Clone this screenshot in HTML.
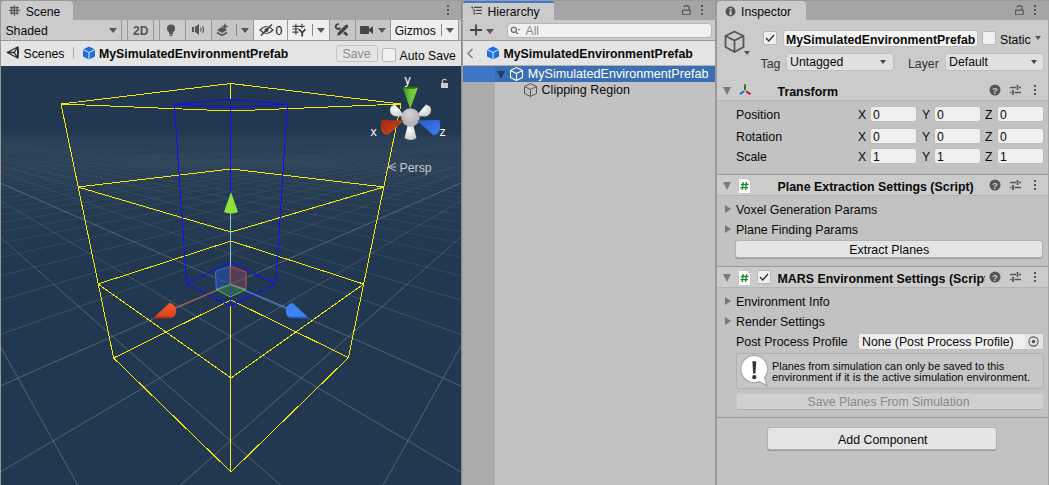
<!DOCTYPE html><html><head><meta charset="utf-8"><style>
*{box-sizing:border-box;margin:0;padding:0}
html,body{width:1049px;height:485px;overflow:hidden;background:#a5a5a5;font-family:"Liberation Sans",sans-serif;color:#090909;font-size:12px}
.a{position:absolute}
.t{position:absolute;white-space:nowrap;line-height:1}
.b{font-weight:bold}
.tabstrip{background:#a5a5a5}
.tab{background:#cbcbcb;border-radius:4px 4px 0 0}
.tb{background:#cbcbcb}
.sep{position:absolute;width:1px;background:#999}
.arr{position:absolute;width:0;height:0;border-left:4px solid transparent;border-right:4px solid transparent;border-top:5px solid #444}
.fld{position:absolute;background:#f0f0f0;border:1px solid #b0b0b0;border-radius:3px}
.btn{position:absolute;background:#e4e4e4;border:1px solid #b2b2b2;border-radius:3px;box-shadow:0 1px 0 #999}
.tri{position:absolute;width:0;height:0;border-top:4px solid transparent;border-bottom:4px solid transparent;border-left:6px solid #555}
</style></head><body><div class="a" style="left:0px;top:0px;width:1049px;height:1px;background:#9a9a9a"></div><div class="a" style="left:0px;top:0px;width:1px;height:485px;background:#999"></div><div class="a" style="left:1px;top:1px;width:72px;height:20px;background:#cbcbcb;border-radius:4px 4px 0 0"></div><svg class="a" style="left:9px;top:5px" width="12" height="12" viewBox="0 0 12 12"><g stroke="#555" stroke-width="1.2" fill="none"><path d="M5.4 0.3V10.8M2.7 1.5V9.5M8.1 1.5V9.5M0 5.4H10.8M1 2.7H9.8M1 8.1H9.8"/></g></svg><div class="t " style="left:25.7px;top:6.27px;font-size:12.2px;">Scene</div><div class="a" style="left:447px;top:5px;width:2px;height:2px;background:#555"></div><div class="a" style="left:447px;top:9px;width:2px;height:2px;background:#555"></div><div class="a" style="left:447px;top:13px;width:2px;height:2px;background:#555"></div><div class="a" style="left:1px;top:20px;width:460px;height:20px;background:#cbcbcb"></div><div class="a" style="left:1px;top:40px;width:460px;height:1px;background:#999"></div><div class="a" style="left:212px;top:20px;width:41px;height:20px;background:#c6c6c6"></div><div class="a" style="left:254px;top:20px;width:33px;height:20px;background:#efefef"></div><div class="a" style="left:288px;top:20px;width:41px;height:20px;background:#efefef"></div><div class="a" style="left:330px;top:20px;width:25px;height:20px;background:#c6c6c6"></div><div class="a" style="left:356px;top:20px;width:34px;height:20px;background:#c6c6c6"></div><div class="a" style="left:391px;top:20px;width:67px;height:20px;background:#efefef"></div><div class="sep" style="left:121px;top:20px;height:20px;background:#999"></div><div class="sep" style="left:127px;top:20px;height:20px;background:#999"></div><div class="sep" style="left:153px;top:20px;height:20px;background:#999"></div><div class="sep" style="left:159px;top:20px;height:20px;background:#999"></div><div class="sep" style="left:185px;top:20px;height:20px;background:#999"></div><div class="sep" style="left:211px;top:20px;height:20px;background:#999"></div><div class="sep" style="left:253px;top:20px;height:20px;background:#999"></div><div class="sep" style="left:287px;top:20px;height:20px;background:#999"></div><div class="sep" style="left:329px;top:20px;height:20px;background:#999"></div><div class="sep" style="left:355px;top:20px;height:20px;background:#999"></div><div class="sep" style="left:390px;top:20px;height:20px;background:#999"></div><div class="sep" style="left:458px;top:20px;height:20px;background:#999"></div><div class="sep" style="left:236px;top:24px;height:12px;background:#888"></div><div class="sep" style="left:312px;top:24px;height:12px;background:#888"></div><div class="sep" style="left:441px;top:24px;height:12px;background:#888"></div><div class="t " style="left:5.4px;top:25.09px;font-size:12.3px;">Shaded</div><div class="arr" style="left:109px;top:28px;border-left-width:4px;border-right-width:4px;border-top:5px solid #555"></div><div class="t b" style="left:133px;top:25.14px;font-size:12px;color:#555">2D</div><svg class="a" style="left:164px;top:23px" width="14" height="14" viewBox="0 0 14 14"><circle cx="7" cy="5.5" r="4" fill="#555"/><rect x="5" y="9" width="4" height="2" fill="#555"/><rect x="5.5" y="11.5" width="3" height="1.5" fill="#555"/></svg><svg class="a" style="left:192px;top:24px" width="13" height="11" viewBox="0 0 13 11"><rect x="0" y="3" width="2" height="5" fill="#555"/><path d="M3 3L7 0V11L3 8Z" fill="#555"/><path d="M8.5 3.5Q10 5.5 8.5 7.5M10.5 2Q12.5 5.5 10.5 9" stroke="#555" stroke-width="1.1" fill="none"/></svg><svg class="a" style="left:216px;top:23px" width="13" height="13" viewBox="0 0 13 13"><path d="M1 7L6 4L11 7L6 10Z" fill="#555"/><path d="M1 9.5L6 12.5L11 9.5" stroke="#555" stroke-width="1.5" fill="none"/><path d="M9 0L10 2.5L12.5 3.5L10 4.5L9 7L8 4.5L5.5 3.5L8 2.5Z" fill="#555"/></svg><div class="arr" style="left:241px;top:28px;border-left-width:4px;border-right-width:4px;border-top:5px solid #555"></div><svg class="a" style="left:259px;top:24px" width="15" height="12" viewBox="0 0 15 12"><path d="M1 6Q7.5 -1 14 6Q7.5 13 1 6Z" stroke="#444" stroke-width="1.2" fill="none"/><circle cx="7.5" cy="6" r="2" fill="#444"/><path d="M2 11.5L13 0.5" stroke="#444" stroke-width="1.5"/></svg><div class="t " style="left:275.5px;top:24.89px;font-size:12.3px;">0</div><svg class="a" style="left:292px;top:23px" width="15" height="15" viewBox="0 0 15 15"><g stroke="#444" stroke-width="1.2" fill="none"><path d="M3.9 0.8V11.8M10 0.8V5.2M0.5 3.3H12.7M0.5 6H7M0.5 9.2H6.5"/></g><path d="M7 6.3L10.2 9.8L13.4 6.3M10.2 9.8V13.5" stroke="#333" stroke-width="1.7" fill="none"/></svg><div class="arr" style="left:317px;top:28px;border-left-width:4px;border-right-width:4px;border-top:5px solid #555"></div><svg class="a" style="left:333px;top:22px" width="17" height="17" viewBox="0 0 17 17"><path d="M6.9 6.8L13.6 12.4" stroke="#444" stroke-width="2.6" stroke-linecap="round"/><path d="M5.9 2.3A2.4 2.4 0 1 0 6.8 6.3" stroke="#444" stroke-width="1.9" fill="none"/><path d="M4 13.8L5 10.4L12.4 3Q13.5 1.9 14.7 3.1Q15.8 4.3 14.8 5.4L7.4 12.8Z" fill="#444" stroke="#c6c6c6" stroke-width="1.4" paint-order="stroke"/></svg><svg class="a" style="left:360px;top:24px" width="14" height="11" viewBox="0 0 14 11"><rect x="0" y="2" width="9" height="8" rx="1" fill="#444"/><path d="M9 5L13 2V10L9 7Z" fill="#444"/></svg><div class="arr" style="left:378px;top:28px;border-left-width:4px;border-right-width:4px;border-top:5px solid #555"></div><div class="t " style="left:394.7px;top:25.26px;font-size:12.1px;">Gizmos</div><div class="arr" style="left:446px;top:28px;border-left-width:4px;border-right-width:4px;border-top:5px solid #555"></div><div class="a" style="left:1px;top:41px;width:460px;height:25px;background:#e4e4e4"></div><svg class="a" style="left:5px;top:45px" width="15" height="15" viewBox="0 0 15 15"><g stroke="#2a2a2a" stroke-width="1.3" fill="none" stroke-linejoin="round"><path d="M2.3 7.5L12.7 2L12.7 13Z"/><path d="M12.7 2Q14.3 7.5 12.7 13"/><path d="M2.3 7.5H9.3L12.7 2M9.3 7.5L12.7 13"/></g></svg><div class="t " style="left:23.5px;top:48.19px;font-size:12.3px;">Scenes</div><div class="sep" style="left:73px;top:47px;height:11px;background:#aaa"></div><svg class="a" style="left:82px;top:46px" width="14" height="14" viewBox="0 0 14 14"><path d="M7 0.5L13 3.5V10.5L7 13.5L1 10.5V3.5Z" fill="#1d6ee0"/><path d="M1 3.5L7 6.5L13 3.5M7 6.5V13.5" stroke="#e8f0ff" stroke-width="1" fill="none"/></svg><div class="t b" style="left:99px;top:47.69px;font-size:12.3px;">MySimulatedEnvironmentPrefab</div><div class="a" style="left:336px;top:45px;width:42px;height:17px;background:#e4e4e4;border:1px solid #c4c4c4;border-radius:3px"></div><div class="t " style="left:342.5px;top:47.69px;font-size:12.3px;color:#8c8c8c">Save</div><div class="a" style="left:382px;top:48px;width:14px;height:14px;background:#f0f0f0;border:1px solid #b8b8b8;border-radius:2px"></div><div class="t " style="left:399.6px;top:49.97px;font-size:12.2px;">Auto Save</div><svg class="a" style="left:1px;top:66px" width="460" height="419" viewBox="1 66 460 419"><defs><linearGradient id="sky" x1="0" y1="0" x2="0" y2="1"><stop offset="0" stop-color="#233b56"/><stop offset="1" stop-color="#223a54"/></linearGradient><linearGradient id="gm" gradientUnits="userSpaceOnUse" x1="0" y1="129" x2="0" y2="485"><stop offset="0" stop-color="#fff" stop-opacity="0"/><stop offset="0.02" stop-color="#fff" stop-opacity="0.5"/><stop offset="0.12" stop-color="#fff" stop-opacity="0.7"/><stop offset="1" stop-color="#fff" stop-opacity="1"/></linearGradient><mask id="m1" maskUnits="userSpaceOnUse" x="0" y="0" width="1049" height="485"><rect x="0" y="0" width="1049" height="485" fill="url(#gm)"/></mask></defs><rect x="0" y="0" width="1049" height="485" fill="#213850"/><linearGradient id="hz" gradientUnits="userSpaceOnUse" x1="0" y1="132" x2="0" y2="260"><stop offset="0" stop-color="#fff" stop-opacity="0"/><stop offset="0.06" stop-color="#fff" stop-opacity="0.045"/><stop offset="0.4" stop-color="#fff" stop-opacity="0.025"/><stop offset="1" stop-color="#fff" stop-opacity="0"/></linearGradient><rect x="0" y="132" width="470" height="130" fill="url(#hz)"/><path d="M-6.8 159.9L20.6 158.5M-17.2 161.4L62.4 157.1M-27.3 162.9L78.1 157.1M-8.3 162.9L116.5 155.9M-17.0 164.6L152.4 154.6M-25.2 166.3L166.8 154.6M-32.8 168.1L199.7 153.5M16.7 166.3L230.5 152.4M62.9 164.6L259.2 151.3M106.0 162.9L286.0 150.3M146.3 161.4L297.9 150.3M183.8 159.9L322.4 149.3M201.2 159.9L345.2 148.4M235.3 158.5L366.4 147.5M267.2 157.1L386.2 146.7M310.0 154.6L404.7 145.9M336.3 153.5L421.8 145.1M360.8 152.4L444.4 143.7M383.4 151.3L458.5 143.1M404.5 150.3L471.6 142.4M431.4 148.4L474.0 143.1M448.6 147.5L471.7 144.4M496.4 161.4L440.4 158.5M478.2 161.4L398.6 157.1M488.3 162.9L382.9 157.1M498.0 164.6L344.5 155.9M478.0 164.6L308.6 154.6M486.2 166.3L294.2 154.6M493.8 168.1L261.3 153.5M444.3 166.3L230.5 152.4M398.1 164.6L201.8 151.3M355.0 162.9L175.0 150.3M314.7 161.4L163.1 150.3M277.2 159.9L138.6 149.3M259.8 159.9L115.8 148.4M225.7 158.5L94.6 147.5M193.8 157.1L74.8 146.7M151.0 154.6L56.3 145.9M124.7 153.5L39.2 145.1M100.2 152.4L16.6 143.7M77.6 151.3L2.5 143.1M56.5 150.3L-5.3 143.1M29.6 148.4L-7.7 143.7M12.4 147.5L-5.3 145.1" stroke="#92979d" stroke-opacity="0.046" stroke-width="1" fill="none"/><path d="M-10.8 168.1L16.7 166.3M-16.6 169.9L62.9 164.6M-21.6 171.9L106.0 162.9M-25.6 174.0L146.3 161.4M-28.6 176.1L183.8 159.9M-30.4 178.4L201.2 159.9M-31.0 180.8L235.3 158.5M-30.2 183.3L267.2 157.1M-27.9 185.9L310.0 154.6M-23.8 188.6L336.3 153.5M-18.0 191.5L360.8 152.4M-10.1 194.5L383.4 151.3M-28.4 201.0L404.5 150.3M-15.4 204.5L431.4 148.4M0.4 208.1L448.6 147.5M93.8 201.0L470.1 145.9M175.1 194.5L474.4 146.7M245.7 188.6L474.5 148.4M306.8 183.3L470.4 151.3M359.6 178.4L473.0 153.5M413.3 171.9L472.0 157.1M456.7 166.3L473.3 161.4M471.8 168.1L444.3 166.3M477.6 169.9L398.1 164.6M482.6 171.9L355.0 162.9M486.6 174.0L314.7 161.4M489.6 176.1L277.2 159.9M491.4 178.4L259.8 159.9M492.0 180.8L225.7 158.5M491.2 183.3L193.8 157.1M488.9 185.9L151.0 154.6M484.8 188.6L124.7 153.5M479.0 191.5L100.2 152.4M471.1 194.5L77.6 151.3M489.4 201.0L56.5 150.3M476.4 204.5L29.6 148.4M460.6 208.1L12.4 147.5M367.2 201.0L-9.1 145.9M285.9 194.5L-8.2 147.5M215.3 188.6L-8.2 149.3M154.2 183.3L-9.4 151.3M101.4 178.4L-6.7 154.6M47.7 171.9L-5.7 158.5M4.3 166.3L-7.0 162.9" stroke="#92979d" stroke-opacity="0.092" stroke-width="1" fill="none"/><path d="M-27.9 211.9L0.4 208.1M-8.3 216.0L93.8 201.0M-13.0 224.6L175.1 194.5M-12.7 234.1L245.7 188.6M-6.4 244.5L306.8 183.3M33.6 250.1L359.6 178.4M166.1 234.1L413.3 171.9M273.0 220.2L456.7 166.3M369.2 204.5L472.6 168.1M488.9 211.9L460.6 208.1M498.0 220.2L367.2 201.0M474.0 224.6L285.9 194.5M473.7 234.1L215.3 188.6M496.1 250.1L154.2 183.3M427.4 250.1L101.4 178.4M294.9 234.1L47.7 171.9M188.0 220.2L4.3 166.3M91.8 204.5L-6.2 169.9" stroke="#92979d" stroke-opacity="0.138" stroke-width="1" fill="none"/><path d="M-21.0 262.1L33.6 250.1M-26.3 282.4L166.1 234.1M85.0 275.3L273.0 220.2M239.8 250.1L369.2 204.5M448.4 208.1L471.5 194.5M482.0 262.1L427.4 250.1M487.3 282.4L294.9 234.1M376.0 275.3L188.0 220.2M221.2 250.1L91.8 204.5M12.6 208.1L-5.2 197.7" stroke="#92979d" stroke-opacity="0.184" stroke-width="1" fill="none"/><path d="M-19.0 305.8L85.0 275.3M104.7 297.6L239.8 250.1M395.7 239.1L448.4 208.1M480.0 305.8L376.0 275.3M356.3 297.6L221.2 250.1M65.3 239.1L12.6 208.1" stroke="#92979d" stroke-opacity="0.230" stroke-width="1" fill="none"/><path d="M-23.2 342.7L104.7 297.6M345.8 268.5L395.7 239.1M464.0 234.1L474.7 224.6M484.2 342.7L356.3 297.6M115.2 268.5L65.3 239.1M-3.0 234.1L-8.4 229.2" stroke="#92979d" stroke-opacity="0.276" stroke-width="1" fill="none"/><path d="M296.4 297.6L345.8 268.5M439.3 255.9L464.0 234.1M164.6 297.6L115.2 268.5M21.7 255.9L-3.0 234.1" stroke="#92979d" stroke-opacity="0.322" stroke-width="1" fill="none"/><path d="M252.6 323.4L296.4 297.6M409.4 282.4L439.3 255.9M208.4 323.4L164.6 297.6M51.6 282.4L21.7 255.9" stroke="#92979d" stroke-opacity="0.368" stroke-width="1" fill="none"/><path d="M202.2 353.1L252.6 323.4M383.0 305.8L409.4 282.4M258.8 353.1L208.4 323.4M78.0 305.8L51.6 282.4" stroke="#92979d" stroke-opacity="0.414" stroke-width="1" fill="none"/><path d="M-31.4 399.9L471.1 178.4M-28.8 489.1L202.2 353.1M156.3 506.5L383.0 305.8M371.2 506.5L473.6 323.4M492.4 399.9L-10.1 178.4M489.8 489.1L258.8 353.1M304.7 506.5L78.0 305.8M89.8 506.5L-7.3 332.8" stroke="#92979d" stroke-opacity="0.460" stroke-width="1" fill="none"/><path d="M61 104L231 83.5L401 104L231 111ZM78 187L231 169L384 187L231 232ZM98 284L231 241L363.6 284L231 378ZM113.6 358L231 300L348.4 357.6L231 472ZM61 104L113.6 358M401 104L348.4 357.6M230.5 111L230.5 472M230.5 83.5L230.5 300" stroke="#f4e70a" stroke-width="1" fill="none" shape-rendering="crispEdges"/><path d="M174.3 104.3L230.7 99.3L287.5 104.3L230.7 107.3ZM186.6 283.7L230.3 262L275.7 283.7L230.3 306ZM174.3 104.3L186.6 283.7M287.5 104.3L275.7 283.7M230.5 107.3L230.5 306M230.5 99.3L230.5 262" stroke="#1010ff" stroke-width="1" fill="none" shape-rendering="crispEdges"/><path d="M230.5 284.5L230.5 212" stroke="#8fc8c8" stroke-width="1"/><path d="M230.5 284.5L172 309" stroke="#d0604a" stroke-width="1"/><path d="M230.5 284.5L290 309" stroke="#4a8ee0" stroke-width="1"/><path d="M215.5 271.4L230.3 266.4L230.3 284.5L216.3 289.5Z" fill="#2a56b0" fill-opacity="0.55" stroke="#3f6ef0" stroke-width="1"/><path d="M230.3 266.4L246 272L246 289.5L230.3 284.5Z" fill="#8a4a5a" fill-opacity="0.45" stroke="#c05050" stroke-width="1"/><path d="M216.3 289.5L230.3 284.5L246 289.5L230.3 297Z" fill="#3a8a50" fill-opacity="0.5" stroke="#60b070" stroke-width="1"/><path d="M231 192L224 212Q231 215 238 212Z" fill="#8ee03a"/><linearGradient id="rc" x1="0" y1="0" x2="0" y2="1"><stop offset="0" stop-color="#f05a2a"/><stop offset="0.8" stop-color="#e2461e"/><stop offset="1" stop-color="#902a10"/></linearGradient><path d="M152.7 318.8L169.5 302.8Q176.3 305 176.2 311.5Q175.5 317.2 171 318.2Z" fill="url(#rc)"/><linearGradient id="bc" x1="0" y1="0" x2="0" y2="1"><stop offset="0" stop-color="#3a7ef0"/><stop offset="0.8" stop-color="#3f86f2"/><stop offset="1" stop-color="#1f4ab0"/></linearGradient><path d="M309.6 318.8L292.4 302.8Q285.6 305 285.8 311.5Q286.5 317.2 291 318.2Z" fill="url(#bc)"/><defs><linearGradient id="gg" x1="0" x2="1" y1="0" y2="0"><stop offset="0" stop-color="#3f8f1e"/><stop offset="0.45" stop-color="#6cc23a"/><stop offset="1" stop-color="#88d850"/></linearGradient><linearGradient id="gr" x1="0" x2="1" y1="0" y2="1"><stop offset="0" stop-color="#a82812"/><stop offset="1" stop-color="#d04a22"/></linearGradient><linearGradient id="gb" x1="0" x2="1" y1="0" y2="1"><stop offset="0" stop-color="#2a5ad0"/><stop offset="1" stop-color="#3f7cf0"/></linearGradient><radialGradient id="gw" cx="0.4" cy="0.35" r="0.7"><stop offset="0" stop-color="#ffffff"/><stop offset="1" stop-color="#c8c8c8"/></radialGradient><radialGradient id="gc" cx="0.45" cy="0.3" r="0.8"><stop offset="0" stop-color="#d2d2d2"/><stop offset="1" stop-color="#a8a8a8"/></radialGradient></defs><path d="M405 116L395 104.5Q389.5 106 390 110.5Q390.5 115.5 396 116.5Z" fill="url(#gw)"/><path d="M416 116L426 104.5Q431.5 106 431 110.5Q430.5 115.5 425 116.5Z" fill="url(#gw)"/><path d="M408 124L404.5 138Q410.5 142 416.5 138L413 124Z" fill="url(#gw)"/><circle cx="410.5" cy="117.5" r="9.3" fill="url(#gc)"/><path d="M402.8 87.5L418 87.5L410.2 108.7Z" fill="url(#gg)"/><ellipse cx="410.4" cy="87.6" rx="7.6" ry="1.2" fill="#2e6e14"/><path d="M404 120.5L381.5 120Q380 126 381.5 131Q383.5 135 388 135Z" fill="url(#gr)"/><path d="M381.5 120L388 135" stroke="#8a2010" stroke-width="0.8" fill="none" opacity="0.5"/><path d="M417 120.5L439.5 120Q441 126 439.5 131Q437.5 135 433 135Z" fill="url(#gb)"/><text x="404.5" y="83.5" font-size="12.5" fill="#fff" font-family="Liberation Sans">y</text><text x="370.5" y="135.5" font-size="12.5" fill="#fff" font-family="Liberation Sans">x</text><text x="439.5" y="135.5" font-size="12.5" fill="#fff" font-family="Liberation Sans">z</text><rect x="441" y="83" width="7" height="5" fill="#ccc"/><path d="M442.5 83V80.5Q444.5 78 446.5 80.5" stroke="#ccc" stroke-width="1.2" fill="none"/><text x="399.5" y="171.5" font-size="12.3" fill="#c4c8cc" font-family="Liberation Sans">Persp</text><path d="M396 163L388 167L396 171M396 167H389" stroke="#c4c8cc" stroke-width="1" fill="none"/></svg><div class="a" style="left:461px;top:1px;width:1px;height:484px;background:#8c8c8c"></div><div class="a" style="left:462px;top:1px;width:1px;height:484px;background:#a0a0a0"></div><div class="a" style="left:463px;top:1px;width:91px;height:20px;background:#cbcbcb;border-radius:4px 4px 0 0"></div><div class="a" style="left:463px;top:1px;width:91px;height:2px;background:#3a79d8;border-radius:4px 4px 0 0"></div><svg class="a" style="left:470px;top:4px" width="14" height="12" viewBox="0 0 14 12"><g fill="#444"><circle cx="2.3" cy="3.4" r="1"/><circle cx="4.4" cy="6.4" r="1"/><circle cx="4.4" cy="9.5" r="1"/></g><path d="M4 3.4H11.8M6.2 6.4H11.8M6.2 9.5H11.8" stroke="#444" stroke-width="1.2"/><path d="M3 4V9.5" stroke="#444" stroke-width="0.6" opacity="0.5"/></svg><div class="t " style="left:487.5px;top:6.27px;font-size:12.2px;">Hierarchy</div><svg class="a" style="left:682px;top:5px" width="9" height="10" viewBox="0 0 9 10"><rect x="0.6" y="5.2" width="7.6" height="4.6" rx="0.8" stroke="#555" stroke-width="1.2" fill="none"/><path d="M1.6 2Q4.2 -0.6 6.8 1.4L7 2.4V5.2" stroke="#555" stroke-width="1.2" fill="none"/></svg><div class="a" style="left:701px;top:5px;width:2px;height:2px;background:#555"></div><div class="a" style="left:701px;top:9px;width:2px;height:2px;background:#555"></div><div class="a" style="left:701px;top:13px;width:2px;height:2px;background:#555"></div><div class="a" style="left:463px;top:20px;width:252px;height:20px;background:#cbcbcb"></div><div class="a" style="left:463px;top:40px;width:252px;height:1px;background:#999"></div><svg class="a" style="left:469px;top:24px" width="14" height="12" viewBox="0 0 14 12"><path d="M7 0.5V11.5M1 6H13" stroke="#444" stroke-width="1.8"/></svg><div class="arr" style="left:486px;top:29px;border-left-width:4px;border-right-width:4px;border-top:5px solid #555"></div><div class="a" style="left:507px;top:23px;width:205px;height:15px;background:#f0f0f0;border:1px solid #b4b4b4;border-radius:4px"></div><svg class="a" style="left:510px;top:26px" width="11" height="10" viewBox="0 0 11 10"><circle cx="3.8" cy="3.8" r="2.6" stroke="#666" stroke-width="1.1" fill="none"/><path d="M5.6 5.6L8 8" stroke="#666" stroke-width="1.2"/><path d="M7.5 3L10.5 3L9 4.5Z" fill="#666"/></svg><div class="t " style="left:525.5px;top:24.97px;font-size:12.2px;color:#8a8a8a">All</div><div class="a" style="left:463px;top:41px;width:252px;height:24px;background:#e4e4e4"></div><div class="a" style="left:463px;top:65px;width:252px;height:1px;background:#b0b0b0"></div><svg class="a" style="left:466px;top:48px" width="8" height="11" viewBox="0 0 8 11"><path d="M6.5 1L2 5.5L6.5 10" stroke="#777" stroke-width="1.3" fill="none"/></svg><svg class="a" style="left:486px;top:46px" width="14" height="14" viewBox="0 0 14 14"><path d="M7 0.5L13 3.5V10.5L7 13.5L1 10.5V3.5Z" fill="#1d6ee0"/><path d="M1 3.5L7 6.5L13 3.5M7 6.5V13.5" stroke="#e8f0ff" stroke-width="1" fill="none"/></svg><div class="t b" style="left:503.5px;top:47.89px;font-size:12.3px;">MySimulatedEnvironmentPrefab</div><div class="a" style="left:463px;top:66px;width:252px;height:419px;background:#c2c2c2"></div><div class="a" style="left:463px;top:66px;width:32px;height:419px;background:#acacac"></div><div class="a" style="left:463px;top:66px;width:252px;height:16px;background:#3a6fb4"></div><div class="a" style="left:463px;top:66px;width:32px;height:16px;background:#3d77c4"></div><div class="arr" style="left:497px;top:71px;border-left:4.5px solid transparent;border-right:4.5px solid transparent;border-top:8px solid #213c66"></div><svg class="a" style="left:510px;top:67px" width="14" height="15" viewBox="0 0 14 15"><g stroke="#fff" stroke-width="1.1" fill="none" stroke-linejoin="round"><path d="M6.5 0.5L12.5 3.5V10.5L6.5 13.5L0.5 10.5V3.5Z"/><path d="M0.5 3.5L6.5 6.5L12.5 3.5M6.5 6.5V13.5"/></g></svg><div class="t " style="left:527.8px;top:68.33px;font-size:12.6px;color:#fff">MySimulatedEnvironmentPrefab</div><svg class="a" style="left:524px;top:83px" width="14" height="15" viewBox="0 0 14 15"><g stroke="#555" stroke-width="1.0" fill="none" stroke-linejoin="round"><path d="M6.5 0.5L12.5 3.5V10.5L6.5 13.5L0.5 10.5V3.5Z"/><path d="M0.5 3.5L6.5 6.5L12.5 3.5M6.5 6.5V13.5"/></g></svg><div class="t " style="left:541.6px;top:84.42px;font-size:12.5px;">Clipping Region</div><div class="a" style="left:715px;top:1px;width:2px;height:484px;background:#9a9a9a"></div><div class="a" style="left:717px;top:1px;width:89px;height:20px;background:#cbcbcb;border-radius:4px 4px 0 0"></div><svg class="a" style="left:725px;top:6px" width="11" height="11" viewBox="0 0 11 11"><circle cx="5.5" cy="5.5" r="5" fill="#555"/><rect x="4.6" y="4.5" width="1.9" height="4.5" fill="#cbcbcb"/><rect x="4.6" y="2" width="1.9" height="1.8" fill="#cbcbcb"/></svg><div class="t " style="left:741px;top:6.27px;font-size:12.2px;">Inspector</div><svg class="a" style="left:1015px;top:5px" width="9" height="10" viewBox="0 0 9 10"><rect x="0.6" y="5.2" width="7.6" height="4.6" rx="0.8" stroke="#555" stroke-width="1.2" fill="none"/><path d="M1.6 2Q4.2 -0.6 6.8 1.4L7 2.4V5.2" stroke="#555" stroke-width="1.2" fill="none"/></svg><div class="a" style="left:1034px;top:5px;width:2px;height:2px;background:#555"></div><div class="a" style="left:1034px;top:9px;width:2px;height:2px;background:#555"></div><div class="a" style="left:1034px;top:13px;width:2px;height:2px;background:#555"></div><div class="a" style="left:717px;top:20px;width:332px;height:60px;background:#cbcbcb"></div><div class="a" style="left:717px;top:80px;width:332px;height:1px;background:#999"></div><svg class="a" style="left:724px;top:30px" width="22" height="24" viewBox="0 0 22 24"><g stroke="#555" stroke-width="1.8" fill="none" stroke-linejoin="round"><path d="M10.5 1.5L19.5 6V17L10.5 22L1.5 17V6Z"/><path d="M1.5 6L10.5 10.5L19.5 6M10.5 10.5V22"/></g></svg><div class="arr" style="left:743.5px;top:51px;border-left-width:3.5px;border-right-width:3.5px;border-top:4px solid #555"></div><div class="a" style="left:763px;top:31px;width:14px;height:14px;background:#f0f0f0;border:1px solid #b8b8b8;border-radius:2px"></div><svg class="a" style="left:765px;top:34px" width="10" height="8" viewBox="0 0 10 8"><path d="M1 4L3.8 7L9 1" stroke="#333" stroke-width="1.4" fill="none"/></svg><div class="a" style="left:783px;top:30px;width:195px;height:17px;background:#f4f4f4;border:1px solid #c0c0c0;border-radius:3px"></div><div class="t b" style="left:786px;top:33.69px;font-size:12.3px;">MySimulatedEnvironmentPrefab</div><div class="a" style="left:982px;top:31px;width:14px;height:14px;background:#f0f0f0;border:1px solid #b8b8b8;border-radius:2px"></div><div class="t " style="left:1000px;top:33.89px;font-size:12.3px;">Static</div><div class="arr" style="left:1034.5px;top:36px;border-left-width:3.5px;border-right-width:3.5px;border-top:4.5px solid #555"></div><div class="t " style="left:760.5px;top:57.69px;font-size:12.3px;color:#333">Tag</div><div class="a" style="left:786px;top:53px;width:108px;height:18px;background:#e0e0e0;border:1px solid #c0c0c0;border-radius:3px"></div><div class="t " style="left:790px;top:56.39px;font-size:12.3px;">Untagged</div><div class="arr" style="left:880px;top:60px;border-left-width:3.5px;border-right-width:3.5px;border-top:4px solid #444"></div><div class="t " style="left:908px;top:57.69px;font-size:12.3px;color:#333">Layer</div><div class="a" style="left:945px;top:53px;width:99px;height:18px;background:#e0e0e0;border:1px solid #c0c0c0;border-radius:3px"></div><div class="t " style="left:949px;top:56.39px;font-size:12.3px;">Default</div><div class="arr" style="left:1031px;top:60px;border-left-width:3.5px;border-right-width:3.5px;border-top:4px solid #444"></div><div class="a" style="left:717px;top:81px;width:332px;height:404px;background:#c2c2c2"></div><div class="a" style="left:717px;top:80px;width:332px;height:20px;background:#cbcbcb"></div><div class="a" style="left:717px;top:100px;width:332px;height:1px;background:#b4b4b4"></div><div class="arr" style="left:723px;top:87px;border-left-width:4.5px;border-right-width:4.5px;border-top:8px solid #7a7a7a"></div><svg class="a" style="left:738px;top:83px" width="14" height="13" viewBox="0 0 14 13"><g stroke-width="1.9" stroke-linecap="round"><path d="M7 2V6.6" stroke="#1e7a26"/><path d="M2.6 10.6L5.4 8.8" stroke="#1466d0"/><path d="M8.8 8.8L11.8 10.8" stroke="#c00810"/></g></svg><div class="a" style="left:777px;top:80px;width:208px;height:20px;overflow:hidden"><div class="t b" style="left:0.5px;top:5.60px;font-size:12.4px;">Transform</div></div><svg class="a" style="left:989px;top:84px" width="12" height="12" viewBox="0 0 12 12"><circle cx="6" cy="6" r="5.5" fill="#555"/><text x="6" y="9.6" font-size="9.5" font-weight="bold" text-anchor="middle" fill="#cbcbcb" font-family="Liberation Sans">?</text></svg><svg class="a" style="left:1009px;top:84px" width="13" height="12" viewBox="0 0 13 12"><path d="M1 3.5H7M10 3.5H12M1 8.5H2.5M5.5 8.5H12" stroke="#555" stroke-width="1.3"/><path d="M8.5 1V6M4 6V11" stroke="#555" stroke-width="1.7"/></svg><div class="a" style="left:1034px;top:85px;width:2px;height:2px;background:#555"></div><div class="a" style="left:1034px;top:89px;width:2px;height:2px;background:#555"></div><div class="a" style="left:1034px;top:93px;width:2px;height:2px;background:#555"></div><div class="t " style="left:736px;top:108.80px;font-size:12.4px;">Position</div><div class="t " style="left:858px;top:108.97px;font-size:12.2px;">X</div><div class="a" style="left:870px;top:106px;width:47px;height:16px;background:#f0f0f0;border:1px solid #bcbcbc;border-radius:3px"></div><div class="t " style="left:873px;top:108.77px;font-size:12.2px;">0</div><div class="t " style="left:922px;top:108.97px;font-size:12.2px;">Y</div><div class="a" style="left:934px;top:106px;width:47px;height:16px;background:#f0f0f0;border:1px solid #bcbcbc;border-radius:3px"></div><div class="t " style="left:937px;top:108.77px;font-size:12.2px;">0</div><div class="t " style="left:985px;top:108.97px;font-size:12.2px;">Z</div><div class="a" style="left:997px;top:106px;width:47px;height:16px;background:#f0f0f0;border:1px solid #bcbcbc;border-radius:3px"></div><div class="t " style="left:1000px;top:108.77px;font-size:12.2px;">0</div><div class="t " style="left:736px;top:130.80px;font-size:12.4px;">Rotation</div><div class="t " style="left:858px;top:130.97px;font-size:12.2px;">X</div><div class="a" style="left:870px;top:128px;width:47px;height:16px;background:#f0f0f0;border:1px solid #bcbcbc;border-radius:3px"></div><div class="t " style="left:873px;top:130.77px;font-size:12.2px;">0</div><div class="t " style="left:922px;top:130.97px;font-size:12.2px;">Y</div><div class="a" style="left:934px;top:128px;width:47px;height:16px;background:#f0f0f0;border:1px solid #bcbcbc;border-radius:3px"></div><div class="t " style="left:937px;top:130.77px;font-size:12.2px;">0</div><div class="t " style="left:985px;top:130.97px;font-size:12.2px;">Z</div><div class="a" style="left:997px;top:128px;width:47px;height:16px;background:#f0f0f0;border:1px solid #bcbcbc;border-radius:3px"></div><div class="t " style="left:1000px;top:130.77px;font-size:12.2px;">0</div><div class="t " style="left:736px;top:150.80px;font-size:12.4px;">Scale</div><div class="t " style="left:858px;top:150.97px;font-size:12.2px;">X</div><div class="a" style="left:870px;top:148px;width:47px;height:16px;background:#f0f0f0;border:1px solid #bcbcbc;border-radius:3px"></div><div class="t " style="left:873px;top:150.77px;font-size:12.2px;">1</div><div class="t " style="left:922px;top:150.97px;font-size:12.2px;">Y</div><div class="a" style="left:934px;top:148px;width:47px;height:16px;background:#f0f0f0;border:1px solid #bcbcbc;border-radius:3px"></div><div class="t " style="left:937px;top:150.77px;font-size:12.2px;">1</div><div class="t " style="left:985px;top:150.97px;font-size:12.2px;">Z</div><div class="a" style="left:997px;top:148px;width:47px;height:16px;background:#f0f0f0;border:1px solid #bcbcbc;border-radius:3px"></div><div class="t " style="left:1000px;top:150.77px;font-size:12.2px;">1</div><div class="a" style="left:717px;top:174px;width:332px;height:1px;background:#999"></div><div class="a" style="left:717px;top:175px;width:332px;height:20px;background:#cbcbcb"></div><div class="a" style="left:717px;top:195px;width:332px;height:1px;background:#b4b4b4"></div><div class="arr" style="left:723px;top:182px;border-left-width:4.5px;border-right-width:4.5px;border-top:8px solid #7a7a7a"></div><svg class="a" style="left:738px;top:178px" width="14" height="16" viewBox="0 0 14 16"><path d="M1.5 0.5H9L12.5 4V14.5Q12.5 15.5 11.5 15.5H1.5Q0.5 15.5 0.5 14.5V1.5Q0.5 0.5 1.5 0.5Z" fill="#fff" stroke="#c4c4c4" stroke-width="1"/><path d="M5.2 4L4.2 12M8.6 4L7.6 12M2.8 6.5H10.4M2.4 9.6H10" stroke="#1d8a2a" stroke-width="1.3" fill="none"/></svg><div class="a" style="left:777px;top:175px;width:208px;height:20px;overflow:hidden"><div class="t b" style="left:0.5px;top:5.60px;font-size:12.4px;">Plane Extraction Settings (Script)</div></div><svg class="a" style="left:989px;top:179px" width="12" height="12" viewBox="0 0 12 12"><circle cx="6" cy="6" r="5.5" fill="#555"/><text x="6" y="9.6" font-size="9.5" font-weight="bold" text-anchor="middle" fill="#cbcbcb" font-family="Liberation Sans">?</text></svg><svg class="a" style="left:1009px;top:179px" width="13" height="12" viewBox="0 0 13 12"><path d="M1 3.5H7M10 3.5H12M1 8.5H2.5M5.5 8.5H12" stroke="#555" stroke-width="1.3"/><path d="M8.5 1V6M4 6V11" stroke="#555" stroke-width="1.7"/></svg><div class="a" style="left:1034px;top:180px;width:2px;height:2px;background:#555"></div><div class="a" style="left:1034px;top:184px;width:2px;height:2px;background:#555"></div><div class="a" style="left:1034px;top:188px;width:2px;height:2px;background:#555"></div><div class="tri" style="left:725px;top:205.0px;border-top-width:4.5px;border-bottom-width:4.5px;border-left:6px solid #777"></div><div class="t " style="left:736px;top:204.10px;font-size:12.4px;">Voxel Generation Params</div><div class="tri" style="left:725px;top:225.0px;border-top-width:4.5px;border-bottom-width:4.5px;border-left:6px solid #777"></div><div class="t " style="left:736px;top:224.10px;font-size:12.4px;">Plane Finding Params</div><div class="btn" style="left:735px;top:240px;width:308px;height:18px"></div><div class="t " style="left:849.3px;top:244.30px;font-size:12.4px;">Extract Planes</div><div class="a" style="left:717px;top:266px;width:332px;height:1px;background:#999"></div><div class="a" style="left:717px;top:267px;width:332px;height:20px;background:#cbcbcb"></div><div class="a" style="left:717px;top:287px;width:332px;height:1px;background:#b4b4b4"></div><div class="arr" style="left:723px;top:274px;border-left-width:4.5px;border-right-width:4.5px;border-top:8px solid #7a7a7a"></div><svg class="a" style="left:738px;top:270px" width="14" height="16" viewBox="0 0 14 16"><path d="M1.5 0.5H9L12.5 4V14.5Q12.5 15.5 11.5 15.5H1.5Q0.5 15.5 0.5 14.5V1.5Q0.5 0.5 1.5 0.5Z" fill="#fff" stroke="#c4c4c4" stroke-width="1"/><path d="M5.2 4L4.2 12M8.6 4L7.6 12M2.8 6.5H10.4M2.4 9.6H10" stroke="#1d8a2a" stroke-width="1.3" fill="none"/></svg><div class="a" style="left:757px;top:270px;width:14px;height:14px;background:#f0f0f0;border:1px solid #b8b8b8;border-radius:2px"></div><svg class="a" style="left:759px;top:273px" width="10" height="8" viewBox="0 0 10 8"><path d="M1 4L3.8 7L9 1" stroke="#333" stroke-width="1.4" fill="none"/></svg><div class="a" style="left:777px;top:267px;width:208px;height:20px;overflow:hidden"><div class="t b" style="left:0.5px;top:5.60px;font-size:12.4px;">MARS Environment Settings (Script</div></div><svg class="a" style="left:989px;top:271px" width="12" height="12" viewBox="0 0 12 12"><circle cx="6" cy="6" r="5.5" fill="#555"/><text x="6" y="9.6" font-size="9.5" font-weight="bold" text-anchor="middle" fill="#cbcbcb" font-family="Liberation Sans">?</text></svg><svg class="a" style="left:1009px;top:271px" width="13" height="12" viewBox="0 0 13 12"><path d="M1 3.5H7M10 3.5H12M1 8.5H2.5M5.5 8.5H12" stroke="#555" stroke-width="1.3"/><path d="M8.5 1V6M4 6V11" stroke="#555" stroke-width="1.7"/></svg><div class="a" style="left:1034px;top:272px;width:2px;height:2px;background:#555"></div><div class="a" style="left:1034px;top:276px;width:2px;height:2px;background:#555"></div><div class="a" style="left:1034px;top:280px;width:2px;height:2px;background:#555"></div><div class="a" style="left:984px;top:267px;width:0px;height:0px;"></div><div class="tri" style="left:725px;top:296.5px;border-top-width:4.5px;border-bottom-width:4.5px;border-left:6px solid #777"></div><div class="t " style="left:736px;top:295.60px;font-size:12.4px;">Environment Info</div><div class="tri" style="left:725px;top:316.5px;border-top-width:4.5px;border-bottom-width:4.5px;border-left:6px solid #777"></div><div class="t " style="left:736px;top:315.60px;font-size:12.4px;">Render Settings</div><div class="t " style="left:736px;top:335.70px;font-size:12.4px;">Post Process Profile</div><div class="a" style="left:858px;top:333px;width:186px;height:17px;background:#f0f0f0;border:1px solid #bcbcbc;border-radius:3px"></div><div class="a" style="left:1025px;top:334px;width:18px;height:15px;background:#e4e4e4"></div><svg class="a" style="left:1028px;top:336px" width="11" height="11" viewBox="0 0 11 11"><circle cx="5.5" cy="5.5" r="4.6" stroke="#555" stroke-width="1.1" fill="none"/><circle cx="5.5" cy="5.5" r="1.8" fill="#555"/></svg><div class="t " style="left:862px;top:336.39px;font-size:12.3px;">None (Post Process Profile)</div><div class="a" style="left:736px;top:353px;width:308px;height:36px;background:#c6c6c6;border:1px solid #b0b0b0;border-radius:3px"></div><svg class="a" style="left:739px;top:354px" width="32" height="33" viewBox="0 0 32 33"><path d="M15.3 1.4A13.6 13.6 0 1 0 20.5 27.6L27.8 31.6L25.6 23.6A13.6 13.6 0 0 0 15.3 1.4Z" fill="#fff" stroke="#a8a8a8" stroke-width="1.2"/><path d="M13.4 7.2H17.2L16.5 19.5H14.1Z" fill="#333"/><circle cx="15.3" cy="23.2" r="2.1" fill="#333"/></svg><div class="t " style="left:772px;top:361.12px;font-size:10.85px;">Planes from simulation can only be saved to this</div><div class="t " style="left:772px;top:372.49px;font-size:11px;">environment if it is the active simulation environment.</div><div class="a" style="left:736px;top:393px;width:308px;height:17px;background:#d0d0d0;border:1px solid #c6c6c6;border-bottom-color:#b0b0b0;border-radius:3px"></div><div class="t " style="left:807.5px;top:396.39px;font-size:12.3px;color:#888">Save Planes From Simulation</div><div class="a" style="left:717px;top:417px;width:332px;height:1px;background:#999"></div><div class="btn" style="left:767px;top:427px;width:230px;height:23px"></div><div class="t " style="left:838px;top:433.80px;font-size:12.4px;">Add Component</div><div class="a" style="left:1048px;top:1px;width:1px;height:484px;background:#a3a3a3"></div></body></html>
